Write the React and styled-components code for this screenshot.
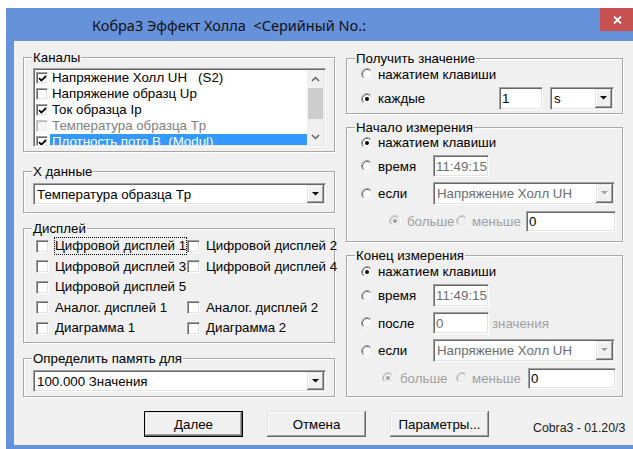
import React from 'react';
import styled, { createGlobalStyle, css } from 'styled-components';

const GlobalStyle = createGlobalStyle`
  html, body {
    margin: 0;
    padding: 0;
    background: #fff;
    overflow: hidden;
  }
  body {
    font-family: "Liberation Sans", Arial, sans-serif;
    font-size: 13.3px;
    color: #000;
  }
`;

// classic 3D edges
const sunken = css`
  box-sizing: border-box;
  border: 1px solid;
  border-color: #a0a0a0 #fff #fff #a0a0a0;
  box-shadow: inset 1px 1px #696969, inset -1px -1px #e3e3e3;
`;

const raised = css`
  box-sizing: border-box;
  background: #f0f0f0;
  box-shadow: inset -1px -1px #696969, inset 1px 1px #e3e3e3,
    inset -2px -2px #a0a0a0, inset 2px 2px #fff;
`;

const Window = styled.div`
  box-sizing: border-box;
  width: 640px;
  height: 441px;
  margin: 8px 0 0 6px;
  padding: 0 8px 4px;
  background: #6692dc;
  display: flex;
  flex-direction: column;
`;

const TitleBar = styled.div`
  height: 33px;
  flex: none;
  display: flex;
  align-items: flex-start;
  justify-content: space-between;
`;

const Title = styled.div`
  align-self: center;
  padding-left: 78px;
  font-family: "Noto Sans", "Open Sans", sans-serif;
  font-size: 14.5px;
  color: #111;
  white-space: pre;
`;

const CloseButton = styled.div`
  width: 34px;
  height: 23px;
  margin-right: 4px;
  background: #c75050;
  display: flex;
  align-items: center;
  justify-content: center;
`;

const Client = styled.div`
  flex: 1;
  background: #f0f0f0;
  padding: 9px 0 0 9px;
  display: flex;
  flex-direction: column;
`;

const Columns = styled.div`
  display: grid;
  grid-template-columns: 312px 277px;
  column-gap: 11px;
  align-items: start;
`;

const Column = styled.div`
  display: flex;
  flex-direction: column;
  margin-top: ${(p) => p.$mt || 0}px;
`;

const Group = styled.fieldset`
  box-sizing: border-box;
  min-width: 0;
  height: ${(p) => p.$h}px;
  margin: ${(p) => p.$mt || 0}px 0 0;
  padding: ${(p) => p.$pt || 0}px 8px 0;
  border: 1px solid #a8a8a8;
  box-shadow: inset 1px 1px #fff, 1px 1px #fff;
`;

const Legend = styled.legend`
  padding: 0 1px;
  line-height: 15px;
  background: #f0f0f0;
  white-space: nowrap;
`;

/* ---- list box ---- */

const ListBox = styled.div`
  ${sunken}
  height: 79px;
  margin-left: 1px;
  padding: 1px;
  background: #fff;
  display: flex;
  overflow: hidden;
`;

const ListItems = styled.div`
  flex: 1;
  overflow: hidden;
`;

const ListRow = styled.div`
  height: 16px;
  display: flex;
  align-items: center;
  padding-left: 1px;
`;

const ItemText = styled.span`
  flex: 1;
  height: 16px;
  line-height: 16px;
  margin-left: 2px;
  padding-left: 2px;
  white-space: pre;
  background: ${(p) => (p.$selected ? '#3399ff' : 'transparent')};
  color: ${(p) => {
    if (p.$selected) return '#fff';
    return p.$disabled ? '#808080' : '#000';
  }};
`;

const ScrollBar = styled.div`
  width: 17px;
  flex: none;
  background: #f0f0f0;
  display: flex;
  flex-direction: column;
`;

const ScrollArrow = styled.div`
  height: 17px;
  flex: none;
  display: flex;
  align-items: center;
  justify-content: center;
`;

const ScrollTrack = styled.div`
  flex: 1;
  padding: 1px 1px 0;
`;

const ScrollThumb = styled.div`
  height: 31px;
  background: #cdcdcd;
`;

/* ---- small controls ---- */

const CheckFrame = styled.span`
  ${sunken}
  flex: none;
  width: ${(p) => p.$size}px;
  height: ${(p) => p.$size}px;
  background: ${(p) => (p.$disabled ? '#f4f4f4' : '#fff')};
  border-color: ${(p) => (p.$disabled ? '#c8c8c8 #fff #fff #c8c8c8' : '#a0a0a0 #fff #fff #a0a0a0')};
  box-shadow: ${(p) => (p.$disabled
    ? 'inset 1px 1px #b4b4b4, inset -1px -1px #eee'
    : 'inset 1px 1px #696969, inset -1px -1px #e3e3e3')};
  display: flex;
  align-items: center;
  justify-content: center;
`;

const RadioIcon = styled.svg`
  flex: none;
  display: block;
`;

const TextBox = styled.div`
  ${sunken}
  flex: none;
  width: ${(p) => p.$w}px;
  height: ${(p) => p.$h || 22}px;
  padding: 0 2px;
  background: #fff;
  color: ${(p) => (p.$dim ? '#6d6d6d' : '#000')};
  display: flex;
  align-items: center;
  white-space: nowrap;
  overflow: hidden;
`;

const ComboBox = styled.div`
  ${sunken}
  flex: none;
  width: ${(p) => (p.$w ? `${p.$w}px` : 'auto')};
  height: ${(p) => p.$h || 22}px;
  margin-left: ${(p) => p.$ml || 0}px;
  padding: 1px;
  background: #fff;
  display: flex;
`;

const ComboText = styled.span`
  flex: 1;
  padding-left: 2px;
  display: flex;
  align-items: center;
  white-space: nowrap;
  overflow: hidden;
  color: ${(p) => (p.$dim ? '#6d6d6d' : '#000')};
`;

const DropButton = styled.span`
  ${raised}
  width: 17px;
  flex: none;
  display: flex;
  align-items: center;
  justify-content: center;
`;

const OptionLabel = styled.label`
  flex: none;
  width: ${(p) => (p.$w ? `${p.$w}px` : 'auto')};
  display: flex;
  align-items: center;
  gap: ${(p) => p.$gap}px;
  overflow: hidden;
  white-space: nowrap;
  color: ${(p) => (p.$disabled ? '#a0a0a0' : '#000')};
`;

const Rows = styled.div`
  display: flex;
  flex-direction: column;
  gap: 5px;
  padding: ${(p) => p.$pt || 0}px 0 0 6px;
`;

const Row = styled.div`
  height: ${(p) => p.$h || 22}px;
  display: flex;
  align-items: center;
  padding-left: ${(p) => p.$indent || 0}px;
`;

const Hint = styled.span`
  margin-left: 3px;
  color: #a0a0a0;
  white-space: nowrap;
`;

/* ---- display checkboxes ---- */

const CheckGrid = styled.div`
  display: grid;
  grid-template-columns: 151px auto;
  grid-auto-rows: 20.5px;
  margin-left: 4px;
`;

const CheckItem = styled.label`
  display: flex;
  align-items: center;
  gap: 5px;
  white-space: nowrap;
  grid-column: ${(p) => (p.$wide ? 'span 2' : 'auto')};
`;

const CheckText = styled.span`
  line-height: 16px;
  border: 1px dotted ${(p) => (p.$focus ? '#000' : 'transparent')};
`;

/* ---- footer ---- */

const Footer = styled.div`
  display: flex;
  align-items: flex-start;
  gap: 24px;
  margin-top: 14px;
  padding-left: 121px;
`;

const PushButton = styled.button`
  ${raised}
  width: 99px;
  height: 26px;
  padding: 0;
  font: inherit;
  color: #000;
  border: ${(p) => (p.$default ? '1px solid #000' : 'none')};
`;

const Version = styled.span`
  align-self: flex-end;
  margin: 0 0 2px 20px;
  font-size: 12.3px;
  line-height: 14px;
  color: #222;
  white-space: nowrap;
`;

function CheckBox({ checked, disabled, size = 13 }) {
  return (
    <CheckFrame $size={size} $disabled={disabled}>
      {checked && (
        <svg width="9" height="9" viewBox="0 0 9 9">
          <path d="M1 4.2l2.4 2.4L8 2" fill="none" stroke="#000" strokeWidth="1.8" />
        </svg>
      )}
    </CheckFrame>
  );
}

function Radio({ checked, disabled }) {
  const outer = disabled ? '#c8c8c8' : '#a0a0a0';
  const inner = disabled ? '#b4b4b4' : '#696969';
  return (
    <RadioIcon width="12" height="12" viewBox="0 0 12 12">
      <circle cx="6" cy="6" r="5" fill={disabled ? '#f0f0f0' : '#fff'} />
      <path d="M2.11 9.89A5.5 5.5 0 0 1 9.89 2.11" stroke={outer} fill="none" />
      <path d="M9.89 2.11A5.5 5.5 0 0 1 2.11 9.89" stroke="#fff" fill="none" />
      <path d="M2.82 9.18A4.5 4.5 0 0 1 9.18 2.82" stroke={inner} fill="none" />
      <path d="M9.18 2.82A4.5 4.5 0 0 1 2.82 9.18" stroke="#e3e3e3" fill="none" />
      {checked && <circle cx="6" cy="6" r="2" fill={disabled ? '#a0a0a0' : '#000'} />}
    </RadioIcon>
  );
}

function Option({ label, checked, disabled, w, gap = 5 }) {
  return (
    <OptionLabel $w={w} $gap={gap} $disabled={disabled}>
      <Radio checked={checked} disabled={disabled} />
      {label}
    </OptionLabel>
  );
}

function Arrow({ disabled }) {
  return (
    <svg width="8" height="5" viewBox="0 0 8 5">
      {disabled && <path d="M1 1h7L4.5 4.5z" fill="#fff" />}
      <path d="M0 0h7L3.5 3.5z" fill={disabled ? '#a0a0a0' : '#000'} />
    </svg>
  );
}

function Combo({ value, w, h, ml, disabled }) {
  return (
    <ComboBox $w={w} $h={h} $ml={ml}>
      <ComboText $dim={disabled}>{value}</ComboText>
      <DropButton>
        <Arrow disabled={disabled} />
      </DropButton>
    </ComboBox>
  );
}

function Chevron({ up }) {
  return (
    <svg width="9" height="6" viewBox="0 0 9 6">
      <path
        d={up ? 'M1 5l3.5-3.5L8 5' : 'M1 1l3.5 3.5L8 1'}
        fill="none"
        stroke="#606060"
        strokeWidth="1.5"
      />
    </svg>
  );
}

const channels = [
  { label: 'Напряжение Холл UH   (S2)', checked: true },
  { label: 'Напряжение образц Up' },
  { label: 'Ток образца Ip', checked: true },
  { label: 'Температура образца Tp', disabled: true },
  { label: 'Плотность пото B  (Modul)', checked: true, selected: true },
];

const displays = [
  { label: 'Цифровой дисплей 1', focus: true },
  { label: 'Цифровой дисплей 2' },
  { label: 'Цифровой дисплей 3' },
  { label: 'Цифровой дисплей 4' },
  { label: 'Цифровой дисплей 5', wide: true },
  { label: 'Аналог. дисплей 1' },
  { label: 'Аналог. дисплей 2' },
  { label: 'Диаграмма 1' },
  { label: 'Диаграмма 2' },
];

function CompareRow({ indent, first, second, box }) {
  return (
    <Row $indent={indent}>
      <Option label="больше" checked disabled w={first} gap={6} />
      <Option label="меньше" disabled w={second} gap={4} />
      <TextBox $w={box} $h={21}>0</TextBox>
    </Row>
  );
}

export default function App() {
  return (
    <>
      <GlobalStyle />
      <Window>
        <TitleBar>
          <Title>Кобра3 Эффект Холла  &lt;Серийный No.:</Title>
          <CloseButton>
            <svg width="9" height="8" viewBox="0 0 9 8">
              <path d="M1 0.5l7 7M8 0.5l-7 7" stroke="#fff" strokeWidth="1.8" />
            </svg>
          </CloseButton>
        </TitleBar>

        <Client>
          <Columns>
            <Column>
              <Group $h={102} $pt={3}>
                <Legend>Каналы</Legend>
                <ListBox>
                  <ListItems>
                    {channels.map((c) => (
                      <ListRow key={c.label}>
                        <CheckBox checked={c.checked} disabled={c.disabled} size={12} />
                        <ItemText $selected={c.selected} $disabled={c.disabled}>
                          {c.label}
                        </ItemText>
                      </ListRow>
                    ))}
                  </ListItems>
                  <ScrollBar>
                    <ScrollArrow><Chevron up /></ScrollArrow>
                    <ScrollTrack><ScrollThumb /></ScrollTrack>
                    <ScrollArrow><Chevron /></ScrollArrow>
                  </ScrollBar>
                </ListBox>
              </Group>

              <Group $h={49} $mt={12} $pt={4}>
                <Legend>X данные</Legend>
                <Combo value="Температура образца Tp" ml={1} />
              </Group>

              <Group $h={122} $mt={8}>
                <Legend>Дисплей</Legend>
                <CheckGrid>
                  {displays.map((d) => (
                    <CheckItem key={d.label} $wide={d.wide}>
                      <CheckBox />
                      <CheckText $focus={d.focus}>{d.label}</CheckText>
                    </CheckItem>
                  ))}
                </CheckGrid>
              </Group>

              <Group $h={46} $mt={8} $pt={4}>
                <Legend>Определить память для</Legend>
                <Combo value="100.000 Значения" ml={1} />
              </Group>
            </Column>

            <Column $mt={1}>
              <Group $h={63}>
                <Legend>Получить значение</Legend>
                <Rows $pt={0}>
                  <Row $h={16}>
                    <Option label="нажатием клавиши" />
                  </Row>
                  <Row $h={23}>
                    <Option label="каждые" checked w={138} />
                    <TextBox $w={44} $h={23}>1</TextBox>
                    <Combo value="s" w={64} h={23} ml={7} />
                  </Row>
                </Rows>
              </Group>

              <Group $h={122} $mt={6}>
                <Legend>Начало измерения</Legend>
                <Rows>
                  <Row $h={15}>
                    <Option label="нажатием клавиши" checked />
                  </Row>
                  <Row>
                    <Option label="время" w={72} />
                    <TextBox $w={56} $dim>11:49:15</TextBox>
                  </Row>
                  <Row $h={23}>
                    <Option label="если" w={72} />
                    <Combo value="Напряжение Холл UH" w={182} h={23} disabled />
                  </Row>
                  <CompareRow indent={28} first={67} second={70} box={90} />
                </Rows>
              </Group>

              <Group $h={149} $mt={6}>
                <Legend>Конец измерения</Legend>
                <Rows $pt={1}>
                  <Row $h={15}>
                    <Option label="нажатием клавиши" checked />
                  </Row>
                  <Row $h={23}>
                    <Option label="время" w={72} />
                    <TextBox $w={56} $h={23} $dim>11:49:15</TextBox>
                  </Row>
                  <Row>
                    <Option label="после" w={72} />
                    <TextBox $w={56} $dim>0</TextBox>
                    <Hint>значения</Hint>
                  </Row>
                  <Row $h={23}>
                    <Option label="если" w={72} />
                    <Combo value="Напряжение Холл UH" w={182} h={23} disabled />
                  </Row>
                  <CompareRow indent={21} first={74} second={72} box={88} />
                </Rows>
              </Group>
            </Column>
          </Columns>

          <Footer>
            <PushButton $default>Далее</PushButton>
            <PushButton>Отмена</PushButton>
            <PushButton>Параметры...</PushButton>
            <Version>Cobra3 - 01.20/3</Version>
          </Footer>
        </Client>
      </Window>
    </>
  );
}
